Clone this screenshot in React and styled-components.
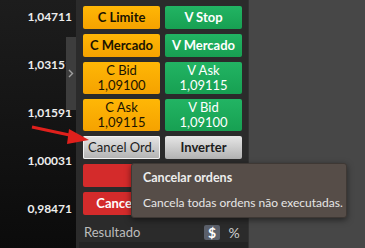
import React from "react";
import styled, { createGlobalStyle } from "styled-components";

const Global = createGlobalStyle`
  html, body { margin: 0; padding: 0; background: #474747; }
  body { font-family: Lato, "Open Sans", sans-serif; }
`;

const Page = styled.div`
  position: relative;
  display: flex;
  width: 365px;
  height: 248px;
  overflow: hidden;
`;

const Chart = styled.div`
  position: relative;
  width: 76px;
  flex: none;
  background: linear-gradient(#1d1d1d, #0b0b0b);
  display: flex;
  flex-direction: column;
  align-items: flex-end;
  padding: 10px 4px 0 0;
  box-sizing: border-box;
  gap: 34px;
`;

const Price = styled.div`
  font-size: 12px;
  line-height: 14px;
  color: #ededed;
  font-weight: 700;
`;

const Tab = styled.div`
  position: absolute;
  right: 0;
  top: 37px;
  width: 10px;
  height: 73px;
  background: #3d3d3d;
  display: flex;
  align-items: center;
  justify-content: center;
`;

const Panel = styled.div`
  width: 173px;
  flex: none;
  background: #2b2b2b;
  display: flex;
  flex-direction: column;
  padding: 6px 6px 0 7px;
  box-sizing: border-box;
  border-right: 1px solid #333;
`;

const Grid = styled.div`
  display: grid;
  grid-template-columns: 77px 77px;
  column-gap: 5px;
  row-gap: 5px;
`;

const palette = {
  orange: { bg: "linear-gradient(#ffb706, #f5a200)", fg: "#1b1400" },
  green: { bg: "linear-gradient(#22b463, #17a052)", fg: "#ffffff" },
  gray: { bg: "linear-gradient(#e6e6e6, #b2b2b2)", fg: "#1c1c1c" },
  red: { bg: "#d42b2b", fg: "#ffffff" },
};

const Btn = styled.div`
  height: ${(p) => (p.$tall ? 32 : 23)}px;
  border-radius: 2px;
  background: ${(p) => palette[p.$kind].bg};
  color: ${(p) => palette[p.$kind].fg};
  font-size: 13px;
  line-height: 15px;
  font-weight: ${(p) => (p.$tall || p.$light ? 400 : 700)};
  display: flex;
  flex-direction: column;
  align-items: center;
  justify-content: center;
  text-align: center;
  box-sizing: border-box;
  ${(p) => (p.$focus ? "box-shadow: inset 0 0 0 1px #f2f2f2;" : "")}
`;

const ResultRow = styled.div`
  display: flex;
  align-items: center;
  height: 20px;
  margin-top: 7px;
  padding-left: 1px;
  gap: 6px;
`;

const ResultLabel = styled.div`
  flex: 1;
  font-size: 13px;
  color: #bdbdbd;
`;

const Toggle = styled.div`
  width: 16px;
  height: 15px;
  border-radius: 2px;
  display: flex;
  align-items: center;
  justify-content: center;
  font-size: 14px;
  font-weight: ${(p) => (p.$on ? 700 : 400)};
  background: ${(p) => (p.$on ? "#5b606b" : "transparent")};
  color: ${(p) => (p.$on ? "#ffffff" : "#cfcfcf")};
`;

const Footer = styled.div`
  flex: 1;
  margin: 0 -6px 0 -4px;
  background: #242424;
`;

const Side = styled.div`
  flex: 1;
  background: #474747;
`;

const Tooltip = styled.div`
  position: absolute;
  left: 131px;
  top: 163px;
  width: 216px;
  height: 55px;
  box-sizing: border-box;
  padding: 6px 8px 0 11px;
  background: #564d48;
  border: 1px solid #3e3834;
  border-radius: 3px;
  box-shadow: 0 2px 6px rgba(0, 0, 0, 0.5);
  color: #ededed;
  font-size: 12px;
  white-space: nowrap;
`;

const TipTitle = styled.div`
  font-weight: 700;
  font-size: 12.5px;
  line-height: 15px;
  margin-bottom: 10px;
`;

const TipBody = styled.div`
  line-height: 15px;
  color: #e6e6e6;
`;

const Arrow = styled.svg`
  position: absolute;
  left: 0;
  top: 0;
  pointer-events: none;
`;

export default function App() {
  return (
    <Page>
      <Global />
      <Chart>
        <Price>1,04711</Price>
        <Price>1,03151</Price>
        <Price>1,01591</Price>
        <Price>1,00031</Price>
        <Price>0,98471</Price>
        <Tab>
          <svg width="6" height="9" viewBox="0 0 6 9">
            <path d="M1 1l3.5 3.5L1 8" fill="none" stroke="#a0a0a0" strokeWidth="1.4" />
          </svg>
        </Tab>
      </Chart>
      <Panel>
        <Grid>
          <Btn $kind="orange">C Limite</Btn>
          <Btn $kind="green">V Stop</Btn>
          <Btn $kind="orange">C Mercado</Btn>
          <Btn $kind="green">V Mercado</Btn>
          <Btn $kind="orange" $tall>
            <span>C Bid</span>
            <span>1,09100</span>
          </Btn>
          <Btn $kind="green" $tall>
            <span>V Ask</span>
            <span>1,09115</span>
          </Btn>
          <Btn $kind="orange" $tall>
            <span>C Ask</span>
            <span>1,09115</span>
          </Btn>
          <Btn $kind="green" $tall>
            <span>V Bid</span>
            <span>1,09100</span>
          </Btn>
          <Btn $kind="gray" $light $focus>Cancel Ord.</Btn>
          <Btn $kind="gray">Inverter</Btn>
          <Btn $kind="red" />
          <Btn $kind="red" />
          <Btn $kind="red">Cancelar</Btn>
          <Btn $kind="red" />
        </Grid>
        <ResultRow>
          <ResultLabel>Resultado</ResultLabel>
          <Toggle $on>$</Toggle>
          <Toggle>%</Toggle>
        </ResultRow>
        <Footer />
      </Panel>
      <Side />
      <Tooltip>
        <TipTitle>Cancelar ordens</TipTitle>
        <TipBody>Cancela todas ordens não executadas.</TipBody>
      </Tooltip>
      <Arrow width="365" height="248">
        <line x1="32" y1="127" x2="74" y2="136" stroke="#e0201c" strokeWidth="3" />
        <polygon points="89,140 69,129 67,144" fill="#e0201c" />
      </Arrow>
    </Page>
  );
}
